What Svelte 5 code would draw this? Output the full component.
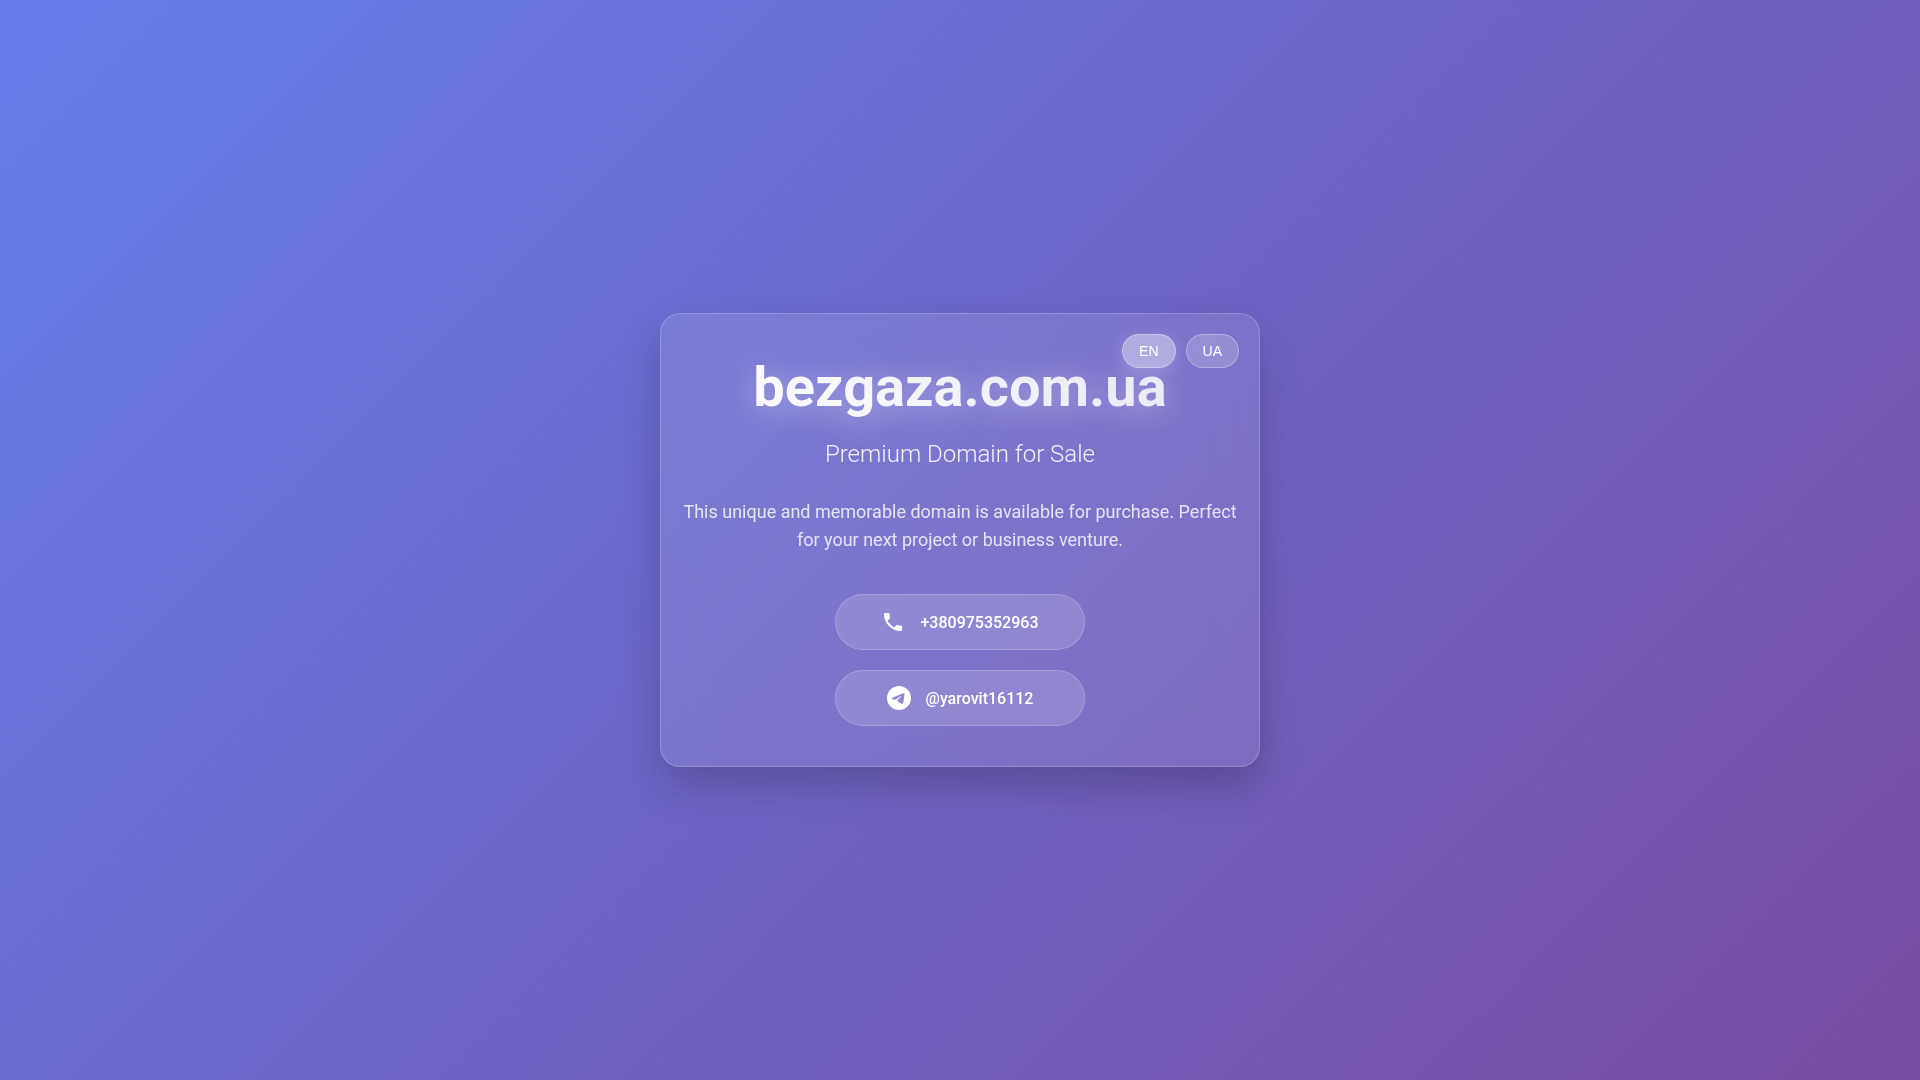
<script lang="ts">
  type Lang = 'en' | 'ua';

  const copy = {
    en: {
      subtitle: 'Premium Domain for Sale',
      text: 'This unique and memorable domain is available for purchase. Perfect for your next project or business venture.',
    },
    ua: {
      subtitle: 'Преміум домен на продаж',
      text: "Цей унікальний домен, що легко запам'ятовується, доступний для покупки. Ідеально для вашого наступного проєкту.",
    },
  };

  let lang = $state<Lang>('en');
  let t = $derived(copy[lang]);
</script>

<main class="page">
  <section class="card">
    <div class="langs">
      <button type="button" class:active={lang === 'en'} onclick={() => (lang = 'en')}>EN</button>
      <button type="button" class:active={lang === 'ua'} onclick={() => (lang = 'ua')}>UA</button>
    </div>

    <h1>bezgaza.com.ua</h1>
    <p class="subtitle">{t.subtitle}</p>
    <p class="text">{t.text}</p>

    <div class="contacts">
      <a class="contact" href="tel:+380975352963">
        <svg viewBox="0 0 24 24" aria-hidden="true">
          <path d="M6.62 10.79c1.44 2.83 3.76 5.14 6.59 6.59l2.2-2.2c.27-.27.67-.36 1.02-.24 1.12.37 2.33.57 3.57.57.55 0 1 .45 1 1V20c0 .55-.45 1-1 1-9.39 0-17-7.61-17-17 0-.55.45-1 1-1h3.5c.55 0 1 .45 1 1 0 1.25.2 2.45.57 3.57.11.35.03.74-.25 1.02l-2.2 2.2z" />
        </svg>
        <span>+380975352963</span>
      </a>
      <a class="contact" href="https://t.me/yarovit16112">
        <svg viewBox="0 0 24 24" aria-hidden="true">
          <path d="M11.944 0A12 12 0 0 0 0 12a12 12 0 0 0 12 12 12 12 0 0 0 12-12A12 12 0 0 0 12 0a12 12 0 0 0-.056 0zm4.962 7.224c.1-.002.321.023.465.14a.506.506 0 0 1 .171.325c.016.093.036.306.02.472-.18 1.898-.962 6.502-1.36 8.627-.168.9-.499 1.201-.82 1.23-.696.065-1.225-.46-1.9-.902-1.056-.693-1.653-1.124-2.678-1.8-1.185-.78-.417-1.21.258-1.91.177-.184 3.247-2.977 3.307-3.23.007-.032.014-.15-.056-.212s-.174-.041-.249-.024c-.106.024-1.793 1.14-5.061 3.345-.48.33-.913.49-1.302.48-.428-.008-1.252-.241-1.865-.44-.752-.245-1.349-.374-1.297-.789.027-.216.325-.437.893-.663 3.498-1.524 5.83-2.529 6.998-3.014 3.332-1.386 4.025-1.627 4.476-1.635z" />
        </svg>
        <span>@yarovit16112</span>
      </a>
    </div>
  </section>
</main>

<style>
  :global(body) {
    margin: 0;
  }
  .page {
    display: flex;
    align-items: center;
    justify-content: center;
    min-height: 100vh;
    box-sizing: border-box;
    font-family: Roboto, 'Liberation Sans', sans-serif;
    color: #fff;
    /* faint staggered dots over the gradient */
    background:
      radial-gradient(circle at 25% 25%, rgba(255, 255, 255, 0.02) 1px, transparent 2px) 0 0 / 50px 50px,
      radial-gradient(circle at 75% 75%, rgba(255, 255, 255, 0.02) 1px, transparent 2px) 0 0 / 50px 50px,
      linear-gradient(135deg, #667eea 0%, #764ba2 100%);
  }
  .card {
    position: relative;
    box-sizing: border-box;
    width: 90%;
    max-width: 600px;
    padding: 40px 20px;
    text-align: center;
    background: rgba(255, 255, 255, 0.1);
    border: 1px solid rgba(255, 255, 255, 0.2);
    border-radius: 20px;
    box-shadow: 0 20px 40px rgba(0, 0, 0, 0.2);
    backdrop-filter: blur(20px);
  }
  .langs {
    position: absolute;
    top: 20px;
    right: 20px;
    display: flex;
    gap: 10px;
  }
  .langs button {
    padding: 8px 16px;
    font-family: 'Liberation Sans', sans-serif;
    font-size: 14px;
    line-height: 16px;
    color: #fff;
    background: rgba(255, 255, 255, 0.2);
    border: 1px solid rgba(255, 255, 255, 0.3);
    border-radius: 20px;
    cursor: pointer;
  }
  .langs button.active {
    background: rgba(255, 255, 255, 0.4);
    box-shadow: 0 4px 15px rgba(255, 255, 255, 0.2);
  }
  h1 {
    margin: 0 0 20px;
    font-size: 56px;
    font-weight: 700;
    line-height: 66px;
    background: linear-gradient(45deg, #fff, rgba(255, 255, 255, 0.8));
    background-clip: text;
    -webkit-text-fill-color: transparent;
    text-shadow: 0 4px 30px rgba(255, 255, 255, 0.4);
  }
  .subtitle {
    margin: 0 0 30px;
    font-size: 24px;
    font-weight: 300;
    line-height: 28px;
    opacity: 0.9;
  }
  .text {
    margin: 0 0 40px;
    font-size: 18px;
    line-height: 28px;
    opacity: 0.8;
  }
  .contacts {
    display: flex;
    flex-direction: column;
    align-items: center;
    gap: 20px;
  }
  .contact {
    display: flex;
    align-items: center;
    justify-content: center;
    gap: 15px;
    box-sizing: border-box;
    min-width: 250px;
    padding: 15px 30px;
    font-size: 16px;
    font-weight: 500;
    color: #fff;
    text-decoration: none;
    background: rgba(255, 255, 255, 0.15);
    border: 1px solid rgba(255, 255, 255, 0.2);
    border-radius: 50px;
  }
  .contact svg {
    width: 24px;
    height: 24px;
    fill: currentColor;
  }
</style>
